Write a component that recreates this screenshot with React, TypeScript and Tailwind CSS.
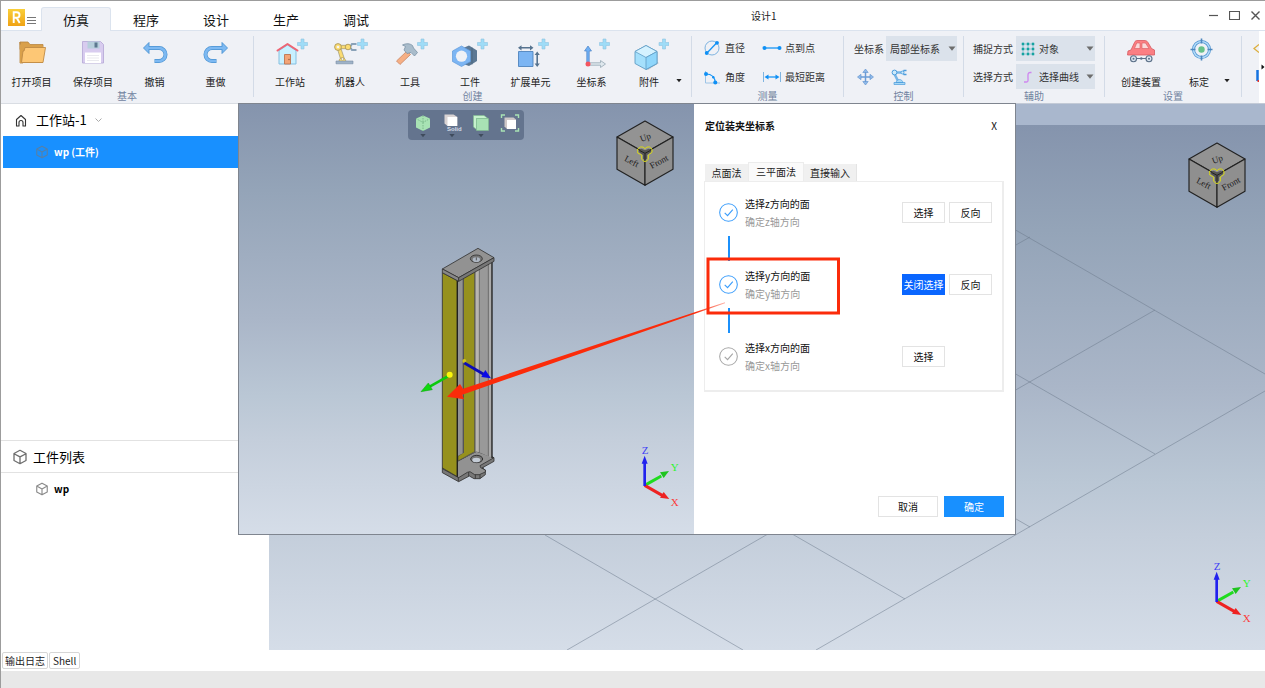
import React from "react";

type Kids = { children?: React.ReactNode };

const Plus = () => (
  <path d="M31 3h3v3.500h3.500v3H34V13h-3V9.500h-3.500v-3H31z" fill="#9fdcf7" stroke="#8fc4e0" strokeWidth="0.600" />
);

const Caret = ({ className = "" }: { className?: string }) => (
  <svg viewBox="0 0 8 5" className={`h-[5px] w-2 ${className}`} aria-hidden="true">
    <path d="M0.500 0.500h7L4 4.800z" fill="currentColor" />
  </svg>
);

/* ---------- ribbon icons ---------- */

const FolderIcon = () => (
  <>
    <path d="M8 6h8l2 2.500h13v5H8z M8 6v21h3z" fill="#d9a04a" stroke="#b98640" strokeWidth="0.800" />
    <path d="M8 27V8.500h10L20 10h11v17z" fill="#d9a04a" />
    <path d="M13 11.500h20.500L31 26.500H9.500L11 15h1z" fill="#fdc775" stroke="#c08b45" strokeWidth="0.900" />
  </>
);
const SaveIcon = () => (
  <>
    <path d="M9.500 5.500h18l3 3v18.500h-21z" fill="#d8ccef" stroke="#b9abd8" strokeWidth="0.900" />
    <path d="M14.500 5.500h12v7h-12z" fill="#b7cfdc" />
    <path d="M21.500 6.500h3v5h-3z" fill="#5d7890" />
    <path d="M12 16.500h16V27H12z" fill="#fff" />
    <path d="M14 19.500h12M14 22h12M14 24.500h12" stroke="#e3e3ea" strokeWidth="0.800" />
  </>
);
const UndoIcon = () => (
  <>
    <path d="M13 12h11a6.500 6.500 0 0 1 0 13h-4.500" fill="none" stroke="#4b93d2" strokeWidth="4" />
    <path d="M14 6.500L8.500 12l5.500 5.500z" fill="#7db9f2" stroke="#4b93d2" strokeWidth="0.900" />
    <path d="M12.500 12h11.500a6.500 6.500 0 0 1 0 13h-4" fill="none" stroke="#7db9f2" strokeWidth="2.700" />
  </>
);
const RedoIcon = () => (
  <g transform="matrix(-1 0 0 1 40 0)">
    <UndoIcon />
  </g>
);
const HouseIcon = () => (
  <>
    <path d="M9 14.500L17.500 9l8.500 5.500V28H9z" fill="#c8f0ff" stroke="#85bfe0" strokeWidth="1" />
    <path d="M14.500 18.500h6V28h-6z" fill="#f3a477" stroke="#bd7450" strokeWidth="0.900" />
    <circle cx="19" cy="23.500" r="0.700" fill="#8d4f35" />
    <path d="M7.500 14.500L17.500 8l10 6.500" fill="none" stroke="#ee6473" strokeWidth="2" strokeLinejoin="round" strokeLinecap="round" />
    <Plus />
  </>
);
const RobotIcon = () => (
  <>
    <path d="M7.500 13l3 10h4L10.800 12zM10 9.300h9v3.400h-9z" fill="#fbdc72" stroke="#8f8a6a" strokeWidth="0.600" />
    <path d="M26.500 8h-4.500l-2 3 2 3h4.500" fill="none" stroke="#8aa2b8" strokeWidth="2" />
    <path d="M9 25.500c0-5 6-5 7 0z" fill="#fbdc72" stroke="#a39155" strokeWidth="0.600" />
    <path d="M6 25h17v2.800H6z" fill="#9fb3c8" stroke="#788ea5" strokeWidth="0.600" />
    <circle cx="8" cy="11" r="3.400" fill="#fbdc72" stroke="#a39155" strokeWidth="0.800" />
    <circle cx="8" cy="11" r="1.300" fill="#f5f5f5" />
    <circle cx="18" cy="11" r="2.800" fill="#fbdc72" stroke="#a39155" strokeWidth="0.800" />
    <circle cx="12.500" cy="23" r="1.200" fill="#fff" stroke="#a39155" strokeWidth="0.500" />
    <Plus />
  </>
);
const HammerIcon = () => (
  <>
    <path d="M6.500 25l10.500-10 3.500 3.500L10 28.500z" fill="#f6af84" stroke="#c98562" strokeWidth="0.800" />
    <path d="M12.500 9c4-2 7.500-1.500 10 .5l1 2.500 4 4.500-3 3.500-3.500-3.500-4 1-3-3.500 1.500-3.500z" fill="#a9bccb" stroke="#7b93a6" strokeWidth="0.800" />
    <Plus />
  </>
);
const NutIcon = () => (
  <>
    <path d="M12 12.500L19 9.500l8 5V25l-8 5-7-2.500z" fill="#5b7894" />
    <path d="M22 11.500v17" stroke="#47627c" strokeWidth="0.800" />
    <path d="M11.500 10l9 5v10.500l-9 5-9-5V15z" fill="#7cb5f3" stroke="#5e99da" strokeWidth="0.700" />
    <circle cx="11.500" cy="20.200" r="5.600" fill="#eff1f6" />
    <Plus />
  </>
);
const ExtendIcon = () => (
  <>
    <path d="M7.500 15.500h14.500v15H7.500z" fill="#7cb5f3" stroke="#4f83bd" strokeWidth="0.900" />
    <path d="M9 11.800h12M26.200 18v11" stroke="#56738f" strokeWidth="1.600" />
    <path d="M7 11.800l3.500-2.600v5.200zM22.500 11.800L19 9.200v5.200zM26.200 15.500l2.600 3.500h-5.200zM26.200 31l2.600-3.500h-5.200z" fill="#56738f" />
    <Plus />
  </>
);
const AxesIcon = () => (
  <>
    <path d="M14.800 27V15h-2.300l3.500-5 3.500 5h-2.300v12z" fill="#6fb0f5" stroke="#4a83c5" strokeWidth="0.700" />
    <path d="M17 26.800h11.500v-2.300l5 3.500-5 3.500v-2.300H17z" fill="#dfe8ee" stroke="#9fb0bb" strokeWidth="0.900" />
    <circle cx="16" cy="28" r="2.500" fill="#f4555f" />
    <Plus />
  </>
);
const CubeIcon = () => (
  <>
    <path d="M17 32l11-6 2 1-11 7z" fill="#c9ccd2" />
    <path d="M17 9.500l11 6v12L17 33.500 6 27.500v-12z" fill="#a5e0fc" stroke="#5f9cc4" strokeWidth="0.900" />
    <path d="M17 9.500l11 6-11 6-11-6z" fill="#d5f2ff" stroke="#5f9cc4" strokeWidth="0.800" />
    <path d="M17 21.500v12l11-6v-12z" fill="#8fd6fb" stroke="#5f9cc4" strokeWidth="0.800" />
    <g transform="translate(2.500 0)">
      <Plus />
    </g>
  </>
);
const CarIcon = () => (
  <>
    <path d="M7 15l3-1 3.500-7.500C14 5 15 4.500 17 4.500h6c2 0 3 .5 4 2l3.500 6 3 1.500v5H6.500z" fill="#fb7f83" stroke="#d65a60" strokeWidth="0.800" />
    <path d="M13.500 12.500l2.200-5.500H19v5.500zM21 7h3.500l3.500 5.500h-7z" fill="#fbd9da" stroke="#d65a60" strokeWidth="0.600" />
    <path d="M12 22.500h16" stroke="#5b7088" strokeWidth="1" />
    <circle cx="12.500" cy="22.800" r="3" fill="#dfe8f2" stroke="#5b7088" strokeWidth="1.100" />
    <circle cx="28" cy="22.800" r="3" fill="#dfe8f2" stroke="#5b7088" strokeWidth="1.100" />
    <circle cx="12.500" cy="22.800" r="1" fill="#5b7088" />
    <circle cx="28" cy="22.800" r="1" fill="#5b7088" />
    <circle cx="20.300" cy="22.500" r="1.200" fill="#5b7088" />
  </>
);
const TargetIcon = () => (
  <>
    <circle cx="22.500" cy="13.500" r="8" fill="none" stroke="#4d94d2" strokeWidth="3" />
    <circle cx="22.500" cy="13.500" r="8" fill="none" stroke="#b5dcf9" strokeWidth="1.500" />
    <circle cx="22.500" cy="13.500" r="3.200" fill="#67c18a" />
    <path d="M22.500 2.500v5M22.500 19.500v5M11.500 13.500h5M28.500 13.500h5" stroke="#4d86bd" strokeWidth="1.600" />
  </>
);

/* ---------- ribbon building blocks ---------- */

const Group = ({ label, className, children }: Kids & { label: string; className: string }) => (
  <section aria-label={label} className="flex shrink-0">
    <div className="flex flex-col">
      <div className={`flex h-[53px] shrink-0 ${className}`}>{children}</div>
      <div className="shrink-0 text-center text-[10px] leading-[14px] text-[#7183a0]">{label}</div>
    </div>
    <div className="h-[61px] w-px bg-[#d3dbe7]" />
  </section>
);

const Tool = ({ label, width, children }: Kids & { label: string; width: string }) => (
  <button type="button" className={`flex flex-col items-center justify-between ${width}`}>
    <svg viewBox="0 0 40 34" className="h-[34px] w-10" aria-hidden="true">
      {children}
    </svg>
    <span className="text-[10px] leading-[14px] whitespace-nowrap text-[#222]">{label}</span>
  </button>
);

const MoreButton = ({ label }: { label: string }) => (
  <button type="button" aria-label={label} className="flex w-2 items-end pb-[6px] text-[#222]">
    <Caret className="h-[4px] w-[6px]" />
  </button>
);

const SmallTool = ({ label, width, gap, children }: Kids & { label: string; width: string; gap: string }) => (
  <button type="button" className={`flex h-6 items-center ${gap} text-[10px] leading-[14px] whitespace-nowrap text-[#333]`}>
    <svg viewBox={width === "w-4" ? "0 0 16 16" : "0 0 20 16"} className={`h-4 ${width}`} aria-hidden="true">
      {children}
    </svg>
    {label}
  </button>
);

const Picker = ({
  id,
  options,
  width,
  pad,
  children,
}: Kids & { id: string; options: string[]; width: string; pad: string }) => (
  <div className={`relative flex items-center ${width}`}>
    <select
      id={id}
      className={`h-[25px] w-full appearance-none bg-[#dbe2eb] ${pad} pr-3 text-[10px] leading-[14px] text-[#333] outline-none`}
    >
      {options.map((o) => (
        <option key={o}>{o}</option>
      ))}
    </select>
    {children}
    <Caret className="pointer-events-none absolute right-[1px] text-[#6d6d6d]" />
  </div>
);

/* ---------- 3D scene parts ---------- */

const ViewCube = () => (
  <svg viewBox="-3 -3 174 198" className="h-[66px] w-[58px]" role="img" aria-label="视图方块">
    <g stroke="#222" strokeWidth="3.500" strokeLinejoin="round">
      <path d="M84 0l84 48-84 48L0 48z" fill="#939393" />
      <path d="M0 48l84 48v97L0 145z" fill="#8f8f8f" />
      <path d="M168 48l-84 48v97l84-48z" fill="#8f8f8f" />
    </g>
    <g fill="#222" fontFamily="Liberation Serif" fontSize="27" textAnchor="middle">
      <text transform="translate(88 57) rotate(-20)">Up</text>
      <text transform="translate(40 129) rotate(27)">Left</text>
      <text transform="translate(130 130) rotate(-28)">Front</text>
    </g>
    <path d="M65 87l8-4 11 5 11-5 8 4v6l-13 9v11l-6 4-6-4v-11l-13-9z" fill="#555" />
    <path d="M84 97v19M84 97l-17-9M84 97l17-9" stroke="#222" strokeWidth="3" />
    <path d="M62 92v-8l8-6h8l6 5 6-5h8l7 6v10l-11 8v12l-6 7h-8l-6-7v-12l-12-6z" fill="none" stroke="#d9d916" strokeWidth="3" />
  </svg>
);

const AxisTriad = () => (
  <svg viewBox="714 645 126 189" className="h-[63px] w-[42px]" role="img" aria-label="坐标轴">
    <path d="M734 766l50-28" stroke="#1fdc1f" strokeWidth="9" />
    <path d="M807 723l-16 21-11-17z" fill="#1fc41f" />
    <path d="M734 766l54 31" stroke="#ee2222" strokeWidth="9" />
    <path d="M808 807l-28-4 11-17z" fill="#ee2222" />
    <path d="M734 768v-72" stroke="#2222ee" strokeWidth="8" />
    <path d="M734 677l9 24h-18z" fill="#2222ee" />
    <g fontFamily="Liberation Serif" fontSize="33" textAnchor="middle">
      <text x="735" y="673" fill="#3f3ff5">Z</text>
      <text x="824" y="724" fill="#2df52d">Y</text>
      <text x="824" y="827" fill="#fb3c3c">X</text>
    </g>
  </svg>
);

const Workpiece = () => (
  <g transform="translate(400 230) scale(0.33333)" strokeLinejoin="round">
    <g stroke="#333" strokeWidth="2.500">
      <path d="M172 694l58-30 52 19v11l-36 20 10 6v14l-16 12h-18l-14-8-32 17-49-27v-14z" fill="#777" />
      <path d="M172 694l58-30 52 19-42 24 2 6 14 7v6l-18 8h-14l-14-9-8 2-26 16-49-27z" fill="#929292" />
      <path d="M175 741v13M206 726v12M226 734v12M240 733v12M250 712v4" />
    </g>
    <path d="M172 150l104-58v592l-46-20-58 30z" fill="#999" />
    <path d="M226 120h12v547l-12-3z" fill="#b8b5b0" />
    <path d="M238 112v555M265 98v580M225 122v544" stroke="#666" strokeWidth="2.500" />
    <path d="M270 96v584" stroke="#aaa" strokeWidth="6" />
    <path d="M276 94v590" stroke="#222" strokeWidth="4" />
    <path d="M190 144l34-20v541l-50 28v-15l16-10z" fill="#96911d" stroke="#444" strokeWidth="2" />
    <path d="M174 152l15-8v525l-15 8z" fill="#929292" />
    <path d="M190 144v525" stroke="#555" strokeWidth="4" />
    <ellipse cx="230" cy="687" rx="18" ry="11" fill="#777" stroke="#222" strokeWidth="2.500" />
    <ellipse cx="229" cy="690" rx="12" ry="7" fill="#c4ccd6" />
    <path d="M127 128l45 24v588l-45-26z" fill="#96911d" stroke="#333" strokeWidth="2.500" />
    <path d="M172 152v588" stroke="#222" strokeWidth="4" />
    <g stroke="#333" strokeWidth="2.500">
      <path d="M127 117l107-62 48 28-106 60z" fill="#929292" />
      <path d="M127 117l49 26v11l-49-26z" fill="#888" />
      <path d="M176 143l106-60v11l-106 60z" fill="#777" />
      <ellipse cx="229" cy="86" rx="18" ry="11" fill="#777" />
    </g>
    <ellipse cx="229" cy="89" rx="11" ry="7" fill="#aeb7c3" />
    <path d="M229 91v-9" stroke="#555" strokeWidth="3" />
    <circle cx="193" cy="393" r="6" fill="#cfc21c" />
    <path d="M193 399l62 36" stroke="#0c0cb8" strokeWidth="8" />
    <path d="M273 445l-29-4 12-21z" fill="#0808e8" />
    <path d="M149 436l-60 34" stroke="#0cc90c" strokeWidth="8" />
    <path d="M63 485l22-26 12 20z" fill="#0fd80f" stroke="#0a9d0a" strokeWidth="1.500" />
    <circle cx="149" cy="434" r="9" fill="#fbf70c" />
  </g>
);

const ViewButton = ({ label, caret = true, children }: Kids & { label: string; caret?: boolean }) => (
  <button type="button" aria-label={label} className="flex w-[29px] flex-col items-center pt-[3px] text-[#3f4b5c]">
    <svg viewBox="0 0 20 20" className="h-5 w-5" aria-hidden="true">
      {children}
    </svg>
    {caret && <Caret className="h-[3px] w-[6px]" />}
  </button>
);

/* ---------- dialog ---------- */

type StepProps = { axis: string; done: boolean; closing?: boolean; reverse?: boolean; line?: boolean };

const Step = ({ axis, done, closing = false, reverse = true, line = true }: StepProps) => (
  <li className="flex h-[72px]">
    <div className="flex w-[19px] flex-col items-center">
      <svg viewBox="0 0 20 20" className={`mt-[10px] h-[19px] w-[19px] shrink-0 ${done ? "text-[#3b9dfb]" : "text-[#a6a6a6]"}`} aria-hidden="true">
        <circle cx="10" cy="10" r="9.300" fill="none" stroke="currentColor" strokeWidth="1.100" />
        <path d="M6 10.300l3 3 5.500-6.300" fill="none" stroke="currentColor" strokeWidth="1.200" />
      </svg>
      {line && <div className="mt-[14px] h-[25px] w-[2px] shrink-0 bg-[#1b90fb]" />}
    </div>
    <div className="ml-[7px] flex-1 pt-[3px] text-[10px]">
      <div className="leading-[15px] text-[#111]">选择{axis}方向的面</div>
      <div className="pt-[3px] leading-[15px] text-[#999]">确定{axis}轴方向</div>
    </div>
    <div className="mt-[9px] flex h-[21px] w-[90px] shrink-0 gap-1 self-start text-[10px] leading-[14px]">
      <button
        type="button"
        className={`w-[43px] border whitespace-nowrap ${closing ? "border-[#0a66ff] bg-[#0a66ff] text-white" : "border-[#e3e3e3] bg-white text-[#111]"}`}
      >
        {closing ? "关闭选择" : "选择"}
      </button>
      {reverse && (
        <button type="button" className="w-[43px] border border-[#e3e3e3] bg-white text-[#111]">
          反向
        </button>
      )}
    </div>
  </li>
);

const FixtureDialog = () => (
  <div
    role="dialog"
    aria-label="定位装夹坐标系"
    className="absolute top-0 left-[237px] flex h-[432px] w-[778px] border border-[#7f858f] bg-white"
  >
    <div className="relative flex-1 bg-[linear-gradient(to_bottom,#8594ad,#94a4b8_20%,#aab6c8_50%,#bac7d5_68%,#c4cedb_78%,#d5dde8)]">
      <svg viewBox="239 104 455 430" className="h-full w-full" role="img" aria-label="工件模型">
        <Workpiece />
      </svg>
      <div className="absolute top-[6px] left-[169px] flex h-[30px] rounded-[4px] bg-[#64748e]">
        <ViewButton label="视角">
          <path d="M10 2.500l7 3v9l-7 3.500-7-3.500v-9z" fill="#a8e2b4" />
          <path d="M10 2.500v7M3 5.500l7 4 7-4M10 9.500V18" stroke="#6fae82" strokeWidth="0.800" strokeDasharray="1.500 1" fill="none" />
        </ViewButton>
        <ViewButton label="显示模式">
          <path d="M2.500 1.500h9l4 2.500v9h-10l-3-2.500z" fill="#d9d3d3" />
          <path d="M5.500 4H15v9H5.500z" fill="#fff" />
          <text x="5" y="18" fontSize="6" fontFamily="Liberation Sans" fontWeight="bold" fill="#d5dbe6">Solid</text>
        </ViewButton>
        <ViewButton label="可见性">
          <path d="M2.500 2.500h10.500l4 3H5.500v11l-3-2.500z" fill="#c6f2cd" stroke="#7fbd8f" strokeWidth="0.600" />
          <path d="M5.500 5.500h12v12h-12z" fill="#a8e2b4" stroke="#7fbd8f" strokeWidth="0.600" />
        </ViewButton>
        <ViewButton label="适应窗口" caret={false}>
          <path d="M1.500 5V2H5M15 2h3.500v3M18.500 15v3H15M5 18H1.500v-3" fill="none" stroke="#a8e2b4" strokeWidth="1.400" />
          <path d="M4.500 4.500h9l2.500 2v9.500H7l-2.500-2.500z" fill="#cfc8c8" />
          <path d="M7 7h9v9H7z" fill="#fff" />
        </ViewButton>
      </div>
      <div className="absolute top-4 right-5">
        <ViewCube />
      </div>
      <div className="absolute right-[14px] bottom-[26px]">
        <AxisTriad />
      </div>
    </div>

    <div className="flex w-[321px] shrink-0 flex-col pr-[11px] pl-[10px]">
      <div className="flex items-center justify-between pt-[14px] pr-[2px] pl-px">
        <h2 className="text-[10px] leading-4 font-bold text-[#111]">定位装夹坐标系</h2>
        <button type="button" aria-label="关闭" className="w-4 text-[10px] leading-4 text-[#111]">
          X
        </button>
      </div>
      <div role="tablist" className="mt-7 flex items-end pl-px text-[10px] leading-[16px] text-[#222]">
        <button role="tab" type="button" className="h-[17px] w-[43px] bg-[#f0f0f0]">
          点面法
        </button>
        <button role="tab" type="button" aria-selected="true" className="h-[19px] w-14 border border-b-0 border-[#ececec] bg-[#fafafa]">
          三平面法
        </button>
        <button role="tab" type="button" className="h-[17px] w-[53px] border-r border-[#e4e4e4] bg-[#f0f0f0]">
          直接输入
        </button>
      </div>
      <ul className="h-[211px] border-2 border-t border-l border-[#ededed] pt-[11px] pr-[10px] pl-[14px]">
        <Step axis="z" done />
        <Step axis="y" done closing />
        <Step axis="x" done={false} reverse={false} line={false} />
      </ul>
      <div className="mt-auto mb-[17px] flex justify-end gap-[6px] text-[10px] leading-[14px]">
        <button type="button" className="h-[21px] w-[60px] border border-[#e3e3e3] bg-white text-[#111]">
          取消
        </button>
        <button type="button" className="h-[21px] w-[60px] border border-[#1890ff] bg-[#1890ff] text-white">
          确定
        </button>
      </div>
    </div>

    <svg viewBox="239 104 776 430" className="pointer-events-none absolute inset-0 h-full w-full" aria-hidden="true">
      <defs>
        <linearGradient id="tail" gradientUnits="userSpaceOnUse" x1="695" y1="0" x2="728" y2="0">
          <stop offset="0" stopColor="#fb2b0a" />
          <stop offset="1" stopColor="#fb2b0a" stopOpacity="0.300" />
        </linearGradient>
      </defs>
      <path d="M447 396.700L460 384l3 4.700L580 350 725 302.300v.9L580 353.700 462.300 394.700l1.700 4.600z" fill="url(#tail)" />
      <rect x="708" y="259" width="130.500" height="54" fill="none" stroke="#fb2b0a" strokeWidth="3" />
    </svg>
  </div>
);

/* ---------- page ---------- */

const BoxIcon = ({ className }: { className: string }) => (
  <svg viewBox="0 0 16 16" className={className} aria-hidden="true">
    <path d="M8 1.300l6 3.200v7L8 14.700 2 11.500v-7zM2 4.700l6 3.200 6-3.200M8 8v6.500" fill="none" stroke="currentColor" strokeWidth="1.300" strokeLinejoin="round" />
  </svg>
);

export default function App() {
  return (
    <div className="flex min-h-screen flex-col overflow-hidden border-t border-l border-[#9c9c9c] bg-white font-['Noto_Sans_CJK_SC',sans-serif] text-black">
      <header className="relative flex h-[29px] items-end">
        <svg viewBox="0 0 17 17" className="mb-1 ml-[7px] h-[17px] w-[17px]" role="img" aria-label="R">
          <defs>
            <linearGradient id="logo" x1="0" y1="0" x2="0" y2="1">
              <stop offset="0" stopColor="#f9cf3a" />
              <stop offset="1" stopColor="#f0a315" />
            </linearGradient>
          </defs>
          <rect width="17" height="17" fill="url(#logo)" />
          <path d="M5.700 14V3.200h3a2.700 2.700 0 0 1 0 5.600h-3M8.600 8.800L11.700 14" fill="none" stroke="#fff" strokeWidth="1.900" />
        </svg>
        <button type="button" aria-label="菜单" className="mb-[5px] ml-[2px] text-[#777]">
          <svg viewBox="0 0 9 9" className="h-[9px] w-[9px]" aria-hidden="true">
            <path d="M0 1.500h9M0 4.500h9M0 7.500h9" stroke="currentColor" />
          </svg>
        </button>
        <nav className="ml-[5px] flex h-[23px] text-[13px] leading-[25px] text-[#111]">
          <a href="#sim" className="relative z-10 h-[24px] w-[70px] rounded-t-[3px] border border-b-0 border-[#dbe3ee] bg-[#eff1f6] text-center leading-[23px]">
            仿真
          </a>
          <a href="#program" className="w-[70px] text-center">程序</a>
          <a href="#design" className="w-[70px] text-center">设计</a>
          <a href="#production" className="w-[70px] text-center">生产</a>
          <a href="#debug" className="w-[70px] text-center">调试</a>
        </nav>
        <h1 className="flex-1 self-center pl-[360px] text-[10px] leading-4 text-[#222]">设计1</h1>
        <div className="flex gap-[10px] self-center pr-1 text-[#555]">
          <button type="button" aria-label="最小化">
            <svg viewBox="0 0 11 11" className="h-[11px] w-[11px]" aria-hidden="true"><path d="M1 5.500h9" stroke="currentColor" strokeWidth="1.200" /></svg>
          </button>
          <button type="button" aria-label="最大化">
            <svg viewBox="0 0 11 11" className="h-[11px] w-[11px]" aria-hidden="true"><path d="M.5 1.500h10v8H.5z" fill="none" stroke="currentColor" strokeWidth="1.200" /></svg>
          </button>
          <button type="button" aria-label="关闭窗口">
            <svg viewBox="0 0 11 11" className="h-[11px] w-[11px]" aria-hidden="true"><path d="M1.500 1.500l8 8M9.500 1.500l-8 8" stroke="currentColor" strokeWidth="1.400" /></svg>
          </button>
        </div>
      </header>

      <div className="flex h-[73px] overflow-hidden border-t border-[#dbe3ee] bg-[#eff1f6] pt-[5px]">
        <Group label="基本" className="pr-[7px]">
          <Tool label="打开项目" width="w-[61px]"><FolderIcon /></Tool>
          <Tool label="保存项目" width="w-[62px]"><SaveIcon /></Tool>
          <Tool label="撤销" width="w-[61px]"><UndoIcon /></Tool>
          <Tool label="重做" width="w-[61px]"><RedoIcon /></Tool>
        </Group>
        <Group label="创建" className="pr-[7px] pl-[6px]">
          <Tool label="工作站" width="w-[60px]"><HouseIcon /></Tool>
          <Tool label="机器人" width="w-[60px]"><RobotIcon /></Tool>
          <Tool label="工具" width="w-[60px]"><HammerIcon /></Tool>
          <Tool label="工件" width="w-[60px]"><NutIcon /></Tool>
          <Tool label="扩展单元" width="w-[61px]"><ExtendIcon /></Tool>
          <Tool label="坐标系" width="w-[61px]"><AxesIcon /></Tool>
          <Tool label="附件" width="w-[54px]"><CubeIcon /></Tool>
          <MoreButton label="更多附件" />
        </Group>
        <Group label="测量" className="pr-[18px] pl-3">
          <div className="grid grid-cols-[auto_auto] content-start gap-x-[17px] gap-y-[5px]">
            <SmallTool label="直径" width="w-4" gap="gap-[5px]">
              <circle cx="8" cy="8" r="7" fill="none" stroke="#7fb4e0" />
              <path d="M2.500 13.500L13 2.500" stroke="#1795f5" strokeWidth="1.300" />
              <circle cx="2.700" cy="13" r="1.900" fill="#0f90f5" />
              <circle cx="13" cy="2.800" r="1.900" fill="#0f90f5" />
            </SmallTool>
            <SmallTool label="点到点" width="w-5" gap="gap-[3px]">
              <path d="M2 8h16" stroke="#1795f5" strokeWidth="1.300" />
              <circle cx="2.500" cy="8" r="2" fill="#0f90f5" />
              <circle cx="17.500" cy="8" r="2" fill="#0f90f5" />
            </SmallTool>
            <SmallTool label="角度" width="w-4" gap="gap-[5px]">
              <path d="M1.500 2v12H16" fill="none" stroke="#9cc4e6" />
              <path d="M2 5c6 0 9 4 9.500 9" fill="none" stroke="#1795f5" strokeWidth="1.200" />
              <circle cx="2" cy="5" r="2" fill="#0f90f5" />
              <circle cx="11.300" cy="13.500" r="2" fill="#0f90f5" />
              <circle cx="9.300" cy="8.300" r="1.200" fill="#0f90f5" />
            </SmallTool>
            <SmallTool label="最短距离" width="w-5" gap="gap-[3px]">
              <path d="M1.500 3v10M18.500 3v10" stroke="#7fb4e0" />
              <path d="M4 8h12" stroke="#1795f5" strokeWidth="1.300" />
              <path d="M2.500 8l4-2.500v5zM17.500 8l-4-2.500v5z" fill="#0f90f5" />
            </SmallTool>
          </div>
        </Group>
        <Group label="控制" className="pr-[6px] pl-[10px]">
          <div className="flex flex-col gap-1">
            <div className="flex items-center gap-[2px] text-[10px] leading-[14px] text-[#333]">
              <label htmlFor="frame" className="w-[30px] whitespace-nowrap">坐标系</label>
              <Picker id="frame" options={["局部坐标系", "世界坐标系"]} width="w-[71px]" pad="pl-1" />
            </div>
            <div className="flex gap-4 pl-[3px]">
              <button type="button" aria-label="移动">
                <svg viewBox="0 0 18 24" className="h-6 w-[18px]" aria-hidden="true">
                  <path d="M8.500 6v12M2.500 12h12" stroke="#6b9cd6" strokeWidth="1.500" />
                  <path d="M8.500 4l2.700 3.500H5.800zM8.500 20l2.700-3.500H5.800zM.5 12L4 9.300v5.400zM16.500 12L13 9.300v5.400z" fill="#8fb9ea" stroke="#5c90cd" strokeWidth="0.600" />
                </svg>
              </button>
              <button type="button" aria-label="关节控制">
                <svg viewBox="0 0 18 24" className="h-6 w-[18px]" aria-hidden="true">
                  <path d="M3.500 9l4 8M4 7.500h8" stroke="#78b6e6" strokeWidth="2.600" />
                  <path d="M15.500 5.500H13l-1 2 1 2h2.500" fill="none" stroke="#4a9cdc" strokeWidth="1.300" />
                  <circle cx="3.500" cy="7.500" r="2.400" fill="#cdeafa" stroke="#4a9cdc" />
                  <circle cx="11.500" cy="7.500" r="1.500" fill="#cdeafa" stroke="#4a9cdc" strokeWidth="0.800" />
                  <path d="M5 17.500c1-4 6-4 7 0zM3 17.500h11v2H3z" fill="#a8d8f5" stroke="#4a9cdc" strokeWidth="0.700" />
                </svg>
              </button>
            </div>
          </div>
        </Group>
        <Group label="辅助" className="pr-[9px] pl-[9px]">
          <div className="flex flex-col gap-[3px] text-[10px] leading-[14px] text-[#333]">
            <div className="flex items-center gap-[3px]">
              <label htmlFor="snap" className="w-10 whitespace-nowrap">捕捉方式</label>
              <Picker id="snap" options={["对象", "网格"]} width="w-[79px]" pad="pl-[23px]">
                <svg viewBox="0 0 14 14" className="pointer-events-none absolute left-[5px] h-[14px] w-[14px]" aria-hidden="true">
                  <path d="M2 .5v13M7 .5v13M12 .5v13M.5 2h13M.5 7h13M.5 12h13" stroke="#7fbfd0" strokeWidth="0.800" />
                  <path d="M.8.8h2.400v2.400H.8zM5.800.8h2.400v2.400H5.800zM10.800.8h2.400v2.400h-2.400zM.8 5.800h2.400v2.400H.8zM5.800 5.800h2.400v2.400H5.800zM10.800 5.800h2.400v2.400h-2.400zM.8 10.800h2.400v2.400H.8zM5.800 10.800h2.400v2.400H5.800zM10.800 10.800h2.400v2.400h-2.400z" fill="#16a3a0" />
                </svg>
              </Picker>
            </div>
            <div className="flex items-center gap-[3px]">
              <label htmlFor="pick" className="w-10 whitespace-nowrap">选择方式</label>
              <Picker id="pick" options={["选择曲线", "选择面"]} width="w-[79px]" pad="pl-[23px]">
                <svg viewBox="0 0 14 14" className="pointer-events-none absolute left-[5px] h-[14px] w-[14px]" aria-hidden="true">
                  <path d="M3 12h2.500c2 0 1.500-2 1.500-4.500S6.500 2.500 9 2.500h1.500" fill="none" stroke="#cf86f0" strokeWidth="1.300" />
                </svg>
              </Picker>
            </div>
          </div>
        </Group>
        <Group label="设置" className="pr-[9px]">
          <Tool label="创建装置" width="w-[72px]"><CarIcon /></Tool>
          <Tool label="标定" width="w-11"><TargetIcon /></Tool>
          <div className="flex pl-[3px]">
            <MoreButton label="更多标定" />
          </div>
        </Group>
        <div className="-mt-[5px] flex flex-1 justify-end">
          <svg viewBox="0 0 6 72" className="h-[72px] w-[6px]" aria-hidden="true">
            <path d="M6 13.500L1 17.500l5 4" fill="none" stroke="#dcae3c" strokeWidth="1.300" />
            <path d="M4.500 39v11" stroke="#1673e0" strokeWidth="2.500" />
            <path d="M4.500 50h2" stroke="#e2372f" strokeWidth="2" />
          </svg>
          <button type="button" aria-label="展开功能区" className="flex w-[6px] items-center justify-end bg-white">
            <svg viewBox="0 0 4 6" className="h-[6px] w-1" aria-hidden="true"><path d="M.5.5L3.500 3l-3 2.500z" fill="#111" /></svg>
          </button>
        </div>
      </div>

      <main className="relative flex flex-1">
        <aside className="flex w-[268px] shrink-0 flex-col">
          <section className="flex-[37] border-t border-[#d9dde3]">
            <button type="button" className="flex h-8 w-full items-center pl-[14px] text-[13px] leading-5">
              <svg viewBox="0 0 12 13" className="h-[13px] w-3" aria-hidden="true">
                <path d="M1.500 12V5.500L6 1.500l4.500 4V12H8V8.500a2 2 0 0 0-4 0V12z" fill="none" stroke="#333" strokeWidth="1.100" strokeLinejoin="round" />
              </svg>
              <span className="ml-[9px]">工作站-1</span>
              <svg viewBox="0 0 7 5" className="ml-2 h-[5px] w-[7px]" aria-hidden="true"><path d="M.5.5l3 3 3-3" fill="none" stroke="#aaa" /></svg>
            </button>
            <button type="button" className="ml-[2px] flex h-8 w-[266px] items-center bg-[#1890ff] pl-[32px] text-[10px] leading-4 font-bold text-white">
              <BoxIcon className="h-[14px] w-[14px] text-[#5580a8]" />
              <span className="ml-[5px]">wp (工件)</span>
            </button>
          </section>
          <section className="flex-[23] border-t border-[#e2e2e2]">
            <h2 className="flex h-8 items-center border-b border-[#e2e2e2] pl-[11px] text-[13px] leading-5">
              <BoxIcon className="h-4 w-4 text-[#6e6e6e]" />
              <span className="ml-[5px]">工件列表</span>
            </h2>
            <button type="button" className="flex h-8 items-center pl-[34px] text-[10px] leading-4 font-bold">
              <BoxIcon className="h-[14px] w-[14px] text-[#8a8a8a]" />
              <span className="ml-[5px]">wp</span>
            </button>
          </section>
        </aside>
        <div className="flex flex-1 flex-col">
          <div className="h-[22px] border-t border-[#c3cad6] bg-[#a9b7cd]" />
          <div className="relative flex-1 bg-[linear-gradient(to_bottom,#8594ad,#94a4b8_20%,#aab6c8_50%,#bac7d5_68%,#c4cedb_78%,#d5dde8)]">
            <svg viewBox="269 125 996 525" preserveAspectRatio="xMidYMid slice" className="absolute inset-0 h-full w-full" aria-hidden="true">
              <path
                d="M1000 221L1265 374M1030 237l-30 17M1155 310l-155 89M1265 391L816 650M1155 454L1000 365M1030 527l-40-23M905 599L780 527M545 535l198 115M780 527L567 650"
                fill="none"
                stroke="#6b7a8c"
                strokeOpacity="0.500"
              />
            </svg>
            <div className="absolute top-[17px] right-[19px]">
              <ViewCube />
            </div>
            <div className="absolute right-[13px] bottom-[26px]">
              <AxisTriad />
            </div>
          </div>
        </div>
        <FixtureDialog />
      </main>

      <footer>
        <div className="flex h-[21px] items-center gap-px pl-px text-[10px] leading-[14px] text-[#222]">
          <button type="button" className="h-[17px] rounded-[2px] border border-[#d6d6d6] px-[2px]">输出日志</button>
          <button type="button" className="h-[17px] rounded-[2px] border border-[#d6d6d6] px-[3px]">Shell</button>
        </div>
        <div className="h-[17px] bg-[#e8e8e8]" />
      </footer>
    </div>
  );
}
